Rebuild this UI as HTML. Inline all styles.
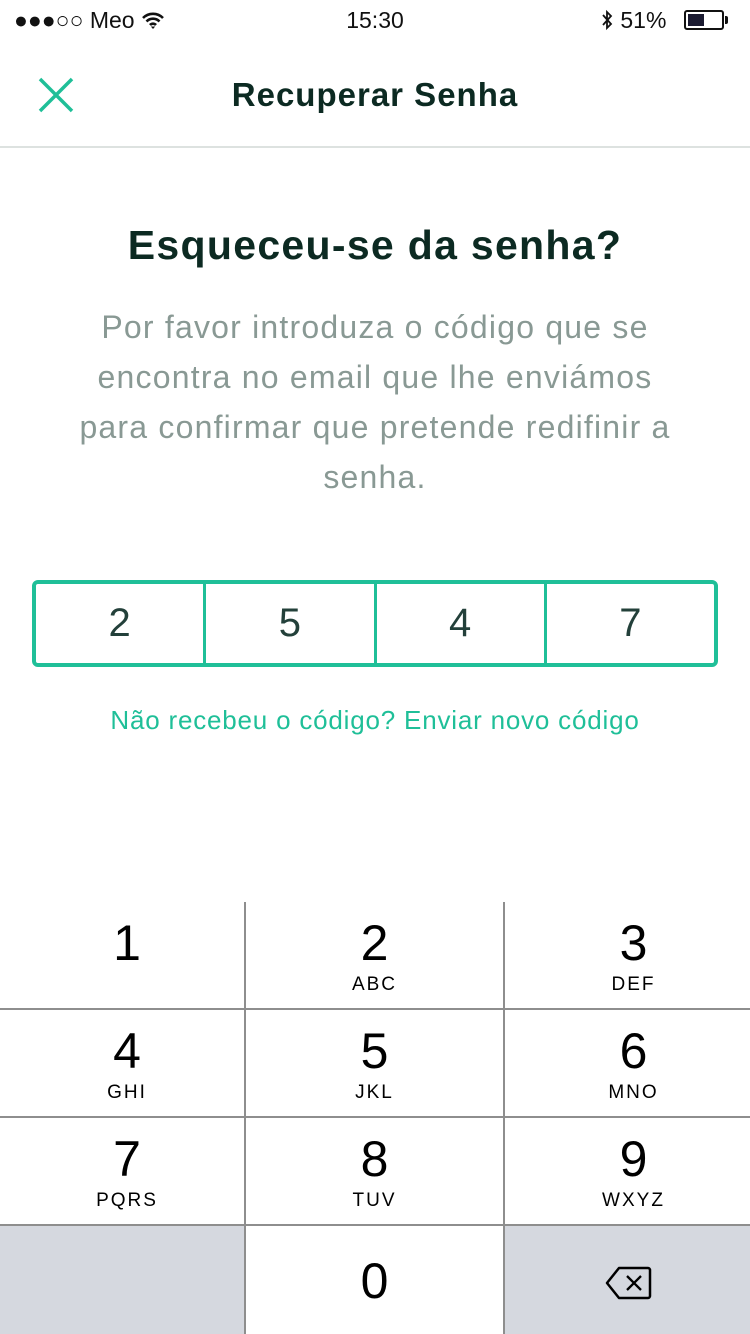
<!DOCTYPE html>
<html><head><meta charset="utf-8"><style>
*{margin:0;padding:0;box-sizing:border-box}
body{width:750px;height:1334px;background:#fff;font-family:"Liberation Sans",sans-serif;position:relative;overflow:hidden}
.abs{position:absolute}
.sb{top:0;height:40px;font-size:23px;color:#111;line-height:40px}
.key{position:absolute;text-align:center;color:#000}
.key .n{font-size:50px;line-height:50px;display:block}
.key .l{font-size:19px;letter-spacing:2px;display:block;margin-top:6px}
</style></head><body>
<div class="abs sb" style="left:14px">●●●○○ Meo
<svg width="24" height="18" viewBox="0 0 24 18" style="vertical-align:-2px"><path d="M2 6a14 14 0 0 1 20 0M5.5 9.5a9 9 0 0 1 13 0M9 13a4 4 0 0 1 6 0" stroke="#111" stroke-width="2.6" fill="none"/><path d="M12 17l-2.2-2.5h4.4z" fill="#111"/></svg></div>
<div class="abs sb" style="left:0;width:750px;text-align:center">15:30</div>
<div class="abs sb" style="left:600px">
<svg width="14" height="24" viewBox="0 0 14 24" style="vertical-align:-4px"><path d="M3 7l8 9-4 4V4l4 4-8 9" stroke="#111" stroke-width="1.8" fill="none"/></svg> 51%</div>
<div class="abs" style="left:684px;top:10px;width:40px;height:20px;border:2px solid #111;border-radius:3px"><div style="margin:2px;width:16px;height:12px;background:#1a1a30"></div></div>
<div class="abs" style="left:725px;top:16px;width:3px;height:8px;background:#111;border-radius:0 2px 2px 0"></div>

<svg class="abs" style="left:38px;top:77px" width="36" height="36" viewBox="0 0 36 36"><path d="M2 2L34 34M34 2L2 34" stroke="#1fbf98" stroke-width="3.5"/></svg>
<div class="abs" style="left:0;width:750px;top:72px;text-align:center;font-size:33px;font-weight:bold;color:#0c2a22;line-height:46px;letter-spacing:1px">Recuperar Senha</div>
<div class="abs" style="left:0;top:146px;width:750px;height:2px;background:#dde2e0"></div>

<div class="abs" style="left:0;width:750px;top:218px;text-align:center;font-size:41px;font-weight:bold;color:#0c2a22;line-height:54px;letter-spacing:1.3px">Esqueceu-se da senha?</div>
<div class="abs" style="left:0;width:750px;top:302px;text-align:center;font-size:32px;color:#899994;line-height:50px;letter-spacing:1.2px;white-space:nowrap">Por favor introduza o código que se<br>encontra no email que lhe enviámos<br>para confirmar que pretende redifinir a<br>senha.</div>

<div class="abs" style="left:32px;top:580px;width:686px;height:87px;border:4px solid #1fbf98;border-radius:6px;display:flex">
<div style="flex:1;border-right:3px solid #1fbf98;text-align:center;font-size:40px;line-height:79px;color:#23403a">2</div>
<div style="flex:1;border-right:3px solid #1fbf98;text-align:center;font-size:40px;line-height:79px;color:#23403a">5</div>
<div style="flex:1;border-right:3px solid #1fbf98;text-align:center;font-size:40px;line-height:79px;color:#23403a">4</div>
<div style="flex:1;text-align:center;font-size:40px;line-height:79px;color:#23403a">7</div>
</div>
<div class="abs" style="left:0;width:750px;top:702px;text-align:center;font-size:26px;color:#1fbf98;line-height:36px;letter-spacing:0.8px">Não recebeu o código? Enviar novo código</div>

<!-- keypad -->
<div class="abs" style="left:0;top:1226px;width:244px;height:108px;background:#d5d8df"></div>
<div class="abs" style="left:505px;top:1226px;width:245px;height:108px;background:#d5d8df"></div>
<div class="abs" style="left:244px;top:902px;width:2px;height:432px;background:#8e8e8e"></div>
<div class="abs" style="left:503px;top:902px;width:2px;height:432px;background:#8e8e8e"></div>
<div class="abs" style="left:0;top:1008px;width:750px;height:2px;background:#8e8e8e"></div>
<div class="abs" style="left:0;top:1116px;width:750px;height:2px;background:#8e8e8e"></div>
<div class="abs" style="left:0;top:1224px;width:750px;height:2px;background:#8e8e8e"></div>

<div class="key" style="left:0;width:254px;top:918px"><span class="n">1</span></div>
<div class="key" style="left:246px;width:257px;top:918px"><span class="n">2</span><span class="l">ABC</span></div>
<div class="key" style="left:505px;width:257px;top:918px"><span class="n">3</span><span class="l">DEF</span></div>
<div class="key" style="left:0;width:254px;top:1026px"><span class="n">4</span><span class="l">GHI</span></div>
<div class="key" style="left:246px;width:257px;top:1026px"><span class="n">5</span><span class="l">JKL</span></div>
<div class="key" style="left:505px;width:257px;top:1026px"><span class="n">6</span><span class="l">MNO</span></div>
<div class="key" style="left:0;width:254px;top:1134px"><span class="n">7</span><span class="l">PQRS</span></div>
<div class="key" style="left:246px;width:257px;top:1134px"><span class="n">8</span><span class="l">TUV</span></div>
<div class="key" style="left:505px;width:257px;top:1134px"><span class="n">9</span><span class="l">WXYZ</span></div>
<div class="key" style="left:246px;width:257px;top:1256px"><span class="n">0</span></div>
<svg class="abs" style="left:605px;top:1265px" width="48" height="36" viewBox="0 0 48 36"><path d="M14 3H43a2 2 0 0 1 2 2V31a2 2 0 0 1-2 2H14L2 18Z" stroke="#000" stroke-width="2.5" fill="none" stroke-linejoin="round"/><path d="M22 11L36 25M36 11L22 25" stroke="#000" stroke-width="2.3"/></svg>
</body></html>
